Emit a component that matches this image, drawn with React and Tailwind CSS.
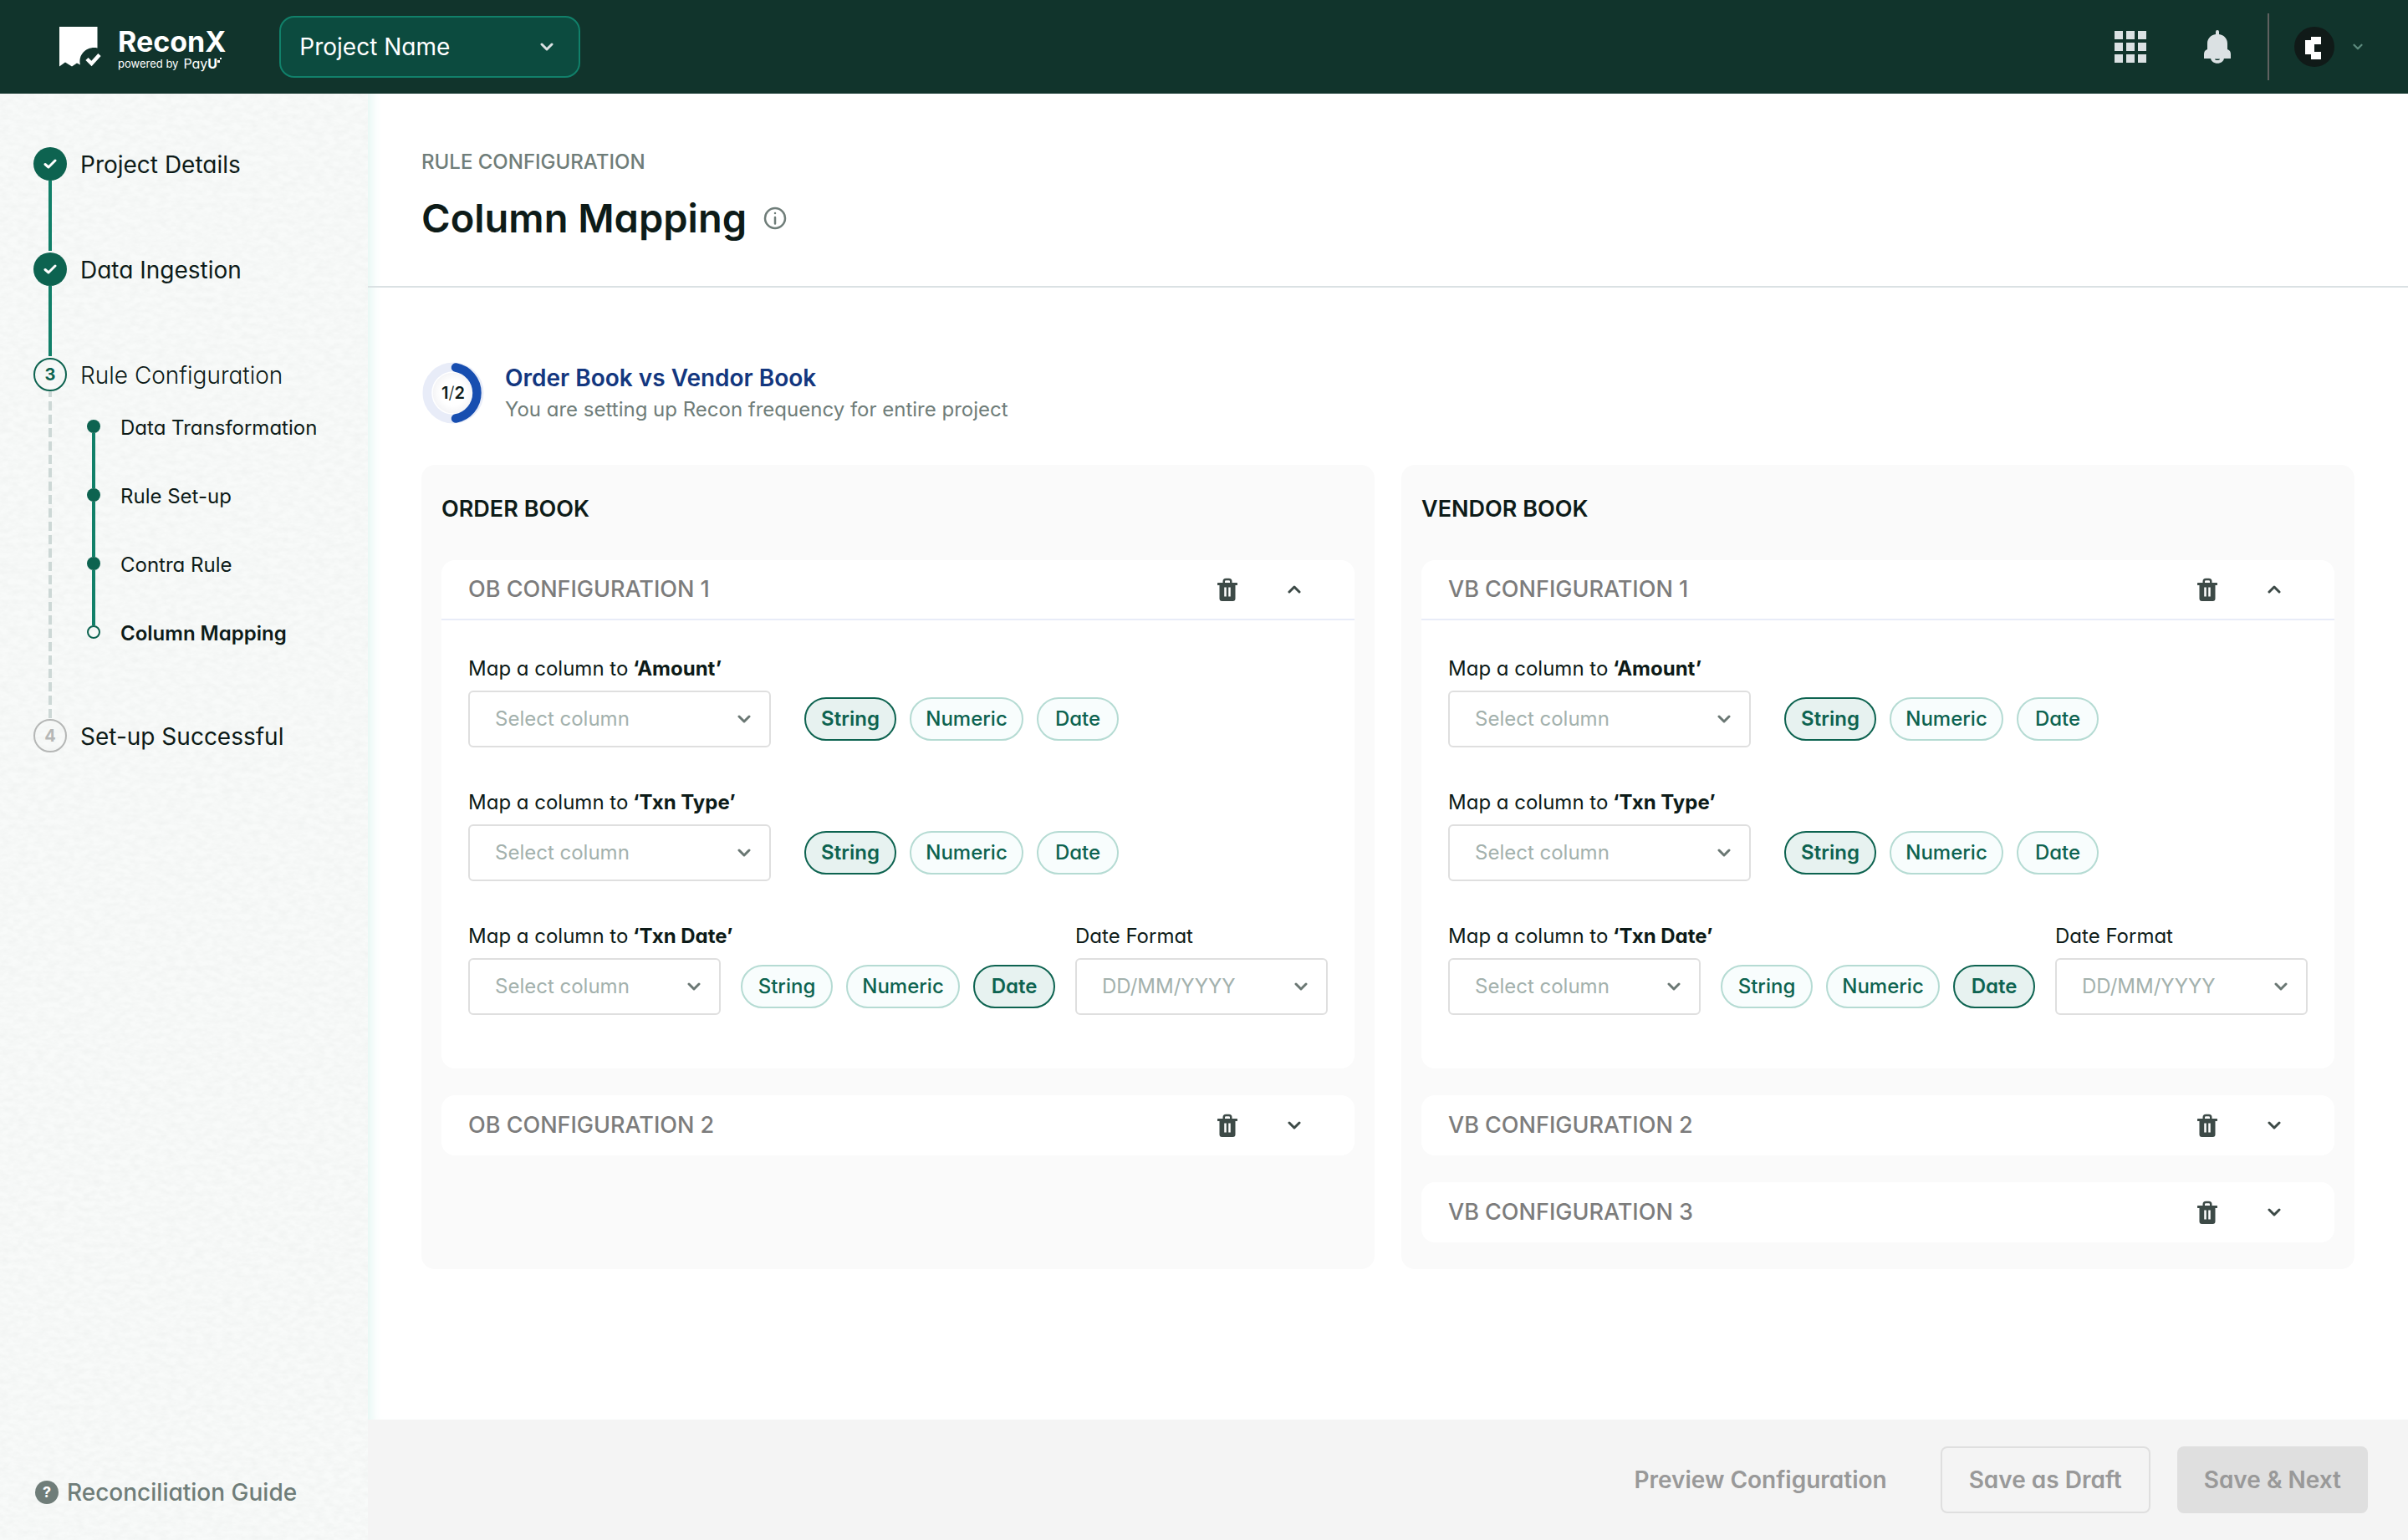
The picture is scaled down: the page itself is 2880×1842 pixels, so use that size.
import { useState } from "react";

const INK = "text-[#0d1b18]";

function Chevron({ className = "", up = false }) {
  return (
    <svg viewBox="0 0 16 10" className={className} fill="none" stroke="currentColor" strokeWidth="3" strokeLinecap="round" strokeLinejoin="round" aria-hidden="true">
      <path d={up ? "M2 8 L8 2 L14 8" : "M2 2 L8 8 L14 2"} />
    </svg>
  );
}

function Logo() {
  return (
    <a href="#home" aria-label="ReconX powered by PayU" className="flex items-center gap-5 text-white">
      <svg viewBox="0 0 50 48" className="h-12 w-[50px] shrink-0" aria-hidden="true">
        <path d="M0 0H45.500V25.500C34 23 22 32 25 45.500L21 43.500L15 47.500L7 42.500L0 47.500Z" fill="#fff" />
        <path d="M33 38.500L38.500 44L48 33.500" fill="none" stroke="#fff" strokeWidth="4.500" />
      </svg>
      <span className="flex flex-col pt-1">
        <span className="text-[34px] leading-9 font-bold">ReconX</span>
        <span className="flex items-center gap-1.5 text-[13px] leading-4">
          powered by
          <span className="flex items-start text-[16px]">
            Pay<b>U</b>
            <svg viewBox="0 0 6 8" className="h-2 w-1.5" fill="#fff" aria-hidden="true">
              <path d="M0 4h3v3H0zM3 1h2v2H3z" />
            </svg>
          </span>
        </span>
      </span>
    </a>
  );
}

function Header() {
  return (
    <header className="flex h-28 items-center bg-[#11342c] pr-[54px] pl-[71px]">
      <Logo />
      <div className="relative ml-16 w-[360px]">
        <select aria-label="Project" className="h-[74px] w-full appearance-none rounded-[18px] border-2 border-[#11806a] bg-[#0c4b3f] pr-16 pl-[22px] text-[28px] text-white">
          <option>Project Name</option>
        </select>
        <Chevron className="pointer-events-none absolute top-8 right-8 h-2.5 w-4 text-[#dbe1e3]" />
      </div>
      <div className="ml-auto flex items-center">
        <button type="button" aria-label="Applications" className="grid grid-cols-3 gap-1">
          {Array.from({ length: 9 }, (_, i) => (
            <span key={i} className="size-2.5 bg-[#dbe1e3]" />
          ))}
        </button>
        <button type="button" aria-label="Notifications" className="ml-[69px]">
          <svg viewBox="0 0 32 40" className="h-10 w-8" aria-hidden="true">
            <path d="M14 5V2a2 2 0 0 1 4 0v3c6 1 10 5 10 11v7c3 1 4 3 4 6v5H0v-5c0-3 1-5 4-6v-7c0-6 4-10 10-11z" fill="#dbe1e3" />
            <path d="M8 33h16c0 9-16 9-16 0z" fill="#dbe1e3" />
            <path d="M13 34.500h6c0 2-6 2-6 0z" fill="#11342c" />
          </svg>
        </button>
        <span className="ml-11 h-20 w-0.5 bg-[#5f6160]" />
        <button type="button" aria-label="Account" className="ml-[30px] flex items-center gap-[22px]">
          <svg viewBox="0 0 48 48" className="size-12" aria-hidden="true">
            <circle cx="24" cy="24" r="24" fill="#101a18" />
            <path d="M20 12H32V21H24V30H32V39H20V33H13V16H20Z" fill="#fff" />
          </svg>
          <Chevron className="h-2 w-3 text-[#5c8a7d]" />
        </button>
      </div>
    </header>
  );
}

function PaperTexture() {
  return (
    <svg className="absolute inset-0 size-full" aria-hidden="true">
      <filter id="paper">
        <feTurbulence type="fractalNoise" baseFrequency="0.09 0.16" numOctaves="4" seed="7" />
        <feColorMatrix values="0 0 0 0 0.86  0 0 0 0 0.88  0 0 0 0 0.87  1.2 0 0 0 -0.35" />
      </filter>
      <rect width="100%" height="100%" filter="url(#paper)" />
    </svg>
  );
}

function Marker({ state, number }) {
  if (state === "done") {
    return (
      <span className="flex size-10 shrink-0 items-center justify-center rounded-full bg-[#0d6350]">
        <svg viewBox="0 0 16 12" className="h-3 w-4" fill="none" stroke="#fff" strokeWidth="3" strokeLinecap="round" strokeLinejoin="round" aria-hidden="true">
          <path d="M2 6.500L6 10L14 2" />
        </svg>
      </span>
    );
  }
  const tone = state === "current" ? "border-[#0d6350] text-[#0d6350]" : "border-[#b5b7b6] text-[#b5b7b6]";
  return <span className={`flex size-10 shrink-0 items-center justify-center rounded-full border-2 text-xl font-bold ${tone}`}>{number}</span>;
}

function Step({ state, number, label, line, light, children }) {
  return (
    <li className="flex gap-4">
      <div className="flex flex-col items-center">
        <Marker state={state} number={number} />
        {line === "solid" && <span className="mb-0.5 h-[84px] w-1 bg-[#118069]" />}
        {line === "dashed" && (
          <svg className="w-1 flex-1" aria-hidden="true">
            <line x1="2" y1="0" x2="2" y2="100%" stroke="#cdd8d6" strokeWidth="4" strokeDasharray="11 5" strokeDashoffset="4" />
          </svg>
        )}
      </div>
      <div>
        <a href="#step" className={`flex h-[42px] items-center text-[28px] ${INK} ${light ? "font-light" : ""}`}>{label}</a>
        {children}
      </div>
    </li>
  );
}

const SUB_STEPS = ["Data Transformation", "Rule Set-up", "Contra Rule", "Column Mapping"];

function Sidebar() {
  return (
    <aside className="relative z-10 flex w-[440px] shrink-0 flex-col bg-[#f8faf9]">
      <PaperTexture />
      <nav aria-label="Set-up steps" className="relative pt-16 pl-10">
        <ol>
          <Step state="done" label="Project Details" line="solid" />
          <Step state="done" label="Data Ingestion" line="solid" />
          <Step state="current" number="3" label="Rule Configuration" line="dashed" light>
            <ol className="mt-5 mb-20 ml-2">
              {SUB_STEPS.map((label, i) => {
                const last = i === SUB_STEPS.length - 1;
                return (
                  <li key={label} className="flex gap-6">
                    <div className="flex flex-col items-center pt-3">
                      <span className={last ? "size-4 rounded-full border-2 border-[#0d6350]" : "size-4 rounded-full bg-[#0d6350]"} />
                      {!last && <span className="-mb-3 h-[66px] w-1 bg-[#118069]" />}
                    </div>
                    <a href="#substep" className={`flex h-11 items-center text-2xl ${INK} ${last ? "font-semibold" : ""}`}>{label}</a>
                  </li>
                );
              })}
            </ol>
          </Step>
          <Step state="todo" number="4" label="Set-up Successful" />
        </ol>
      </nav>
      <a href="#guide" className="relative mt-auto flex items-center gap-2.5 pb-9 pl-[42px] text-[28px] font-medium text-[#6f7d79]">
        <span className="flex size-7 items-center justify-center rounded-full bg-[#6f7d79] text-lg font-bold text-white">?</span>
        Reconciliation Guide
      </a>
    </aside>
  );
}

function ProgressRing() {
  return (
    <div className="relative flex size-[76px] items-center justify-center">
      <svg viewBox="0 0 76 76" className="absolute inset-0" fill="none" aria-hidden="true">
        <defs>
          <radialGradient id="dial">
            <stop offset="0.600" stopColor="#fff" />
            <stop offset="1" stopColor="#f4f4f6" />
          </radialGradient>
        </defs>
        <circle cx="38" cy="38" r="30.500" stroke="#e8ecf8" strokeWidth="12" />
        <circle cx="38" cy="38" r="25" fill="url(#dial)" stroke="#fff" strokeWidth="1.500" />
        <path d="M41 7.500A31 31 0 0 1 41 68.500" stroke="#174eb0" strokeWidth="10.500" strokeLinecap="round" />
      </svg>
      <span className={`relative text-xl font-semibold ${INK}`}>
        1<span className="font-light">/</span>2
      </span>
    </div>
  );
}

function Field({ label, strong, placeholder, className }) {
  return (
    <label className={`flex flex-col gap-2 ${className}`}>
      <span className={`text-2xl leading-9 whitespace-nowrap ${INK}`}>
        {label}
        {strong && <b className="font-bold"> ‘{strong}’</b>}
      </span>
      <span className="relative">
        <select className="h-[68px] w-full appearance-none rounded-md border-2 border-[#dfdfdf] bg-white pr-14 pl-[30px] text-2xl text-[#a3b1ad]">
          <option>{placeholder}</option>
        </select>
        <Chevron className="pointer-events-none absolute top-[29px] right-6 h-2.5 w-4 text-[#6a7773]" />
      </span>
    </label>
  );
}

const TYPES = [
  { type: "String", width: "w-[110px]" },
  { type: "Numeric", width: "w-[136px]" },
  { type: "Date", width: "w-[98px]" },
];

function Chips({ initial, name }) {
  const [value, setValue] = useState(initial);
  return (
    <div role="group" aria-label={name} className="mb-2 flex gap-4">
      {TYPES.map(({ type, width }) => (
        <button
          key={type}
          type="button"
          aria-pressed={type === value}
          onClick={() => setValue(type)}
          className={`h-[52px] rounded-full border-2 text-2xl text-[#0d6350] ${width} ${
            type === value ? "border-[#0d6350] bg-[#e7f2f0] font-semibold" : "border-[#b5dbd3] bg-[#f8fdfd] font-medium"
          }`}
        >
          {type}
        </button>
      ))}
    </div>
  );
}

function Trash() {
  return (
    <svg viewBox="0 0 24 28" className="h-7 w-6" aria-hidden="true">
      <path d="M7.750 7V4.500a2.500 2.500 0 0 1 2.500-2.500h3.500a2.500 2.500 0 0 1 2.500 2.500V7" fill="none" stroke="#3d4a47" strokeWidth="2.500" />
      <path d="M1 6H23a1 1 0 0 1 0 3H21.500V25a3 3 0 0 1-3 3H5.500a3 3 0 0 1-3-3V9H1a1 1 0 0 1 0-3Z" fill="#3d4a47" />
      <path d="M9.500 11.500V22.500M14.500 11.500V22.500" stroke="#fff" strokeWidth="2.500" />
    </svg>
  );
}

function ConfigCard({ title, startOpen = false }) {
  const [open, setOpen] = useState(startOpen);
  return (
    <section className="rounded-2xl bg-white">
      <div className={`flex h-[72px] items-center pr-[60px] pl-8 ${open ? "border-b-2 border-[#e8ecf8]" : ""}`}>
        <h3 className="text-[27px] font-medium text-[#7c7c7c]">{title}</h3>
        <button type="button" aria-label={`Delete ${title}`} className="ml-auto">
          <Trash />
        </button>
        <button type="button" aria-label={`Toggle ${title}`} aria-expanded={open} onClick={() => setOpen(!open)} className="ml-14 px-1 py-3">
          <Chevron up={open} className="h-2.5 w-4 text-[#3d4a47]" />
        </button>
      </div>
      {open && (
        <div className="flex flex-col gap-12 px-8 pt-10 pb-16">
          {["Amount", "Txn Type"].map((column) => (
            <div key={column} className="flex items-end gap-10">
              <Field label="Map a column to" strong={column} placeholder="Select column" className="w-[362px]" />
              <Chips initial="String" name={`${column} type`} />
            </div>
          ))}
          <div className="flex items-end gap-6">
            <Field label="Map a column to" strong="Txn Date" placeholder="Select column" className="min-w-0 flex-1" />
            <Chips initial="Date" name="Txn Date type" />
            <Field label="Date Format" placeholder="DD/MM/YYYY" className="min-w-0 flex-1" />
          </div>
        </div>
      )}
    </section>
  );
}

function Book({ title, prefix, count }) {
  return (
    <section className="min-w-0 flex-1 rounded-2xl bg-[#fafafa] px-6 pt-8 pb-8">
      <h2 className={`text-[27px] leading-[42px] font-semibold ${INK}`}>{title}</h2>
      <div className="mt-10 flex flex-col gap-8">
        {Array.from({ length: count }, (_, i) => (
          <ConfigCard key={i} title={`${prefix} CONFIGURATION ${i + 1}`} startOpen={i === 0} />
        ))}
      </div>
    </section>
  );
}

export default function App() {
  return (
    <div className="flex min-h-screen flex-col bg-white font-['Inter','Open_Sans',sans-serif] [font-feature-settings:'cv11']">
      <Header />
      <div className="flex flex-1">
        <Sidebar />
        <div className="flex min-w-0 flex-1 flex-col">
          <main className="flex-1 shadow-[inset_14px_0_14px_-10px_#e2f6f2]">
            <div className="border-b-2 border-[#dae1e3] px-16 pt-16 pb-[50px]">
              <p className="text-2xl leading-9 font-medium text-[#6f7d79]">RULE CONFIGURATION</p>
              <div className="mt-[18px] flex items-center gap-5">
                <h1 className={`text-[47px] leading-[62px] font-semibold ${INK}`}>Column Mapping</h1>
                <button type="button" aria-label="About column mapping">
                  <svg viewBox="0 0 28 28" className="size-7" fill="none" stroke="#6f7d79" strokeWidth="2.500" strokeLinecap="round" aria-hidden="true">
                    <circle cx="14" cy="14" r="12" />
                    <path d="M14 13V20.500M14 8V8.100" />
                  </svg>
                </button>
              </div>
            </div>
            <div className="px-16 pt-[88px] pb-16">
              <div className="flex items-center gap-6">
                <ProgressRing />
                <div>
                  <h2 className="text-[28px] leading-10 font-semibold text-[#13377f]">Order Book vs Vendor Book</h2>
                  <p className="text-2xl leading-9 text-[#6f7d79]">You are setting up Recon frequency for entire project</p>
                </div>
              </div>
              <div className="mt-12 flex gap-8">
                <Book title="ORDER BOOK" prefix="OB" count={2} />
                <Book title="VENDOR BOOK" prefix="VB" count={3} />
              </div>
            </div>
          </main>
          <footer className="flex h-36 items-center justify-end gap-8 bg-[#f4f4f4] pr-12 text-[28px] font-semibold text-[#999]">
            <button type="button" className="px-8">Preview Configuration</button>
            <button type="button" className="h-20 rounded-lg border-2 border-[#dfdfdf] px-8">Save as Draft</button>
            <button type="button" className="h-20 rounded-lg bg-[#dfdfdf] px-8">Save &amp; Next</button>
          </footer>
        </div>
      </div>
    </div>
  );
}
